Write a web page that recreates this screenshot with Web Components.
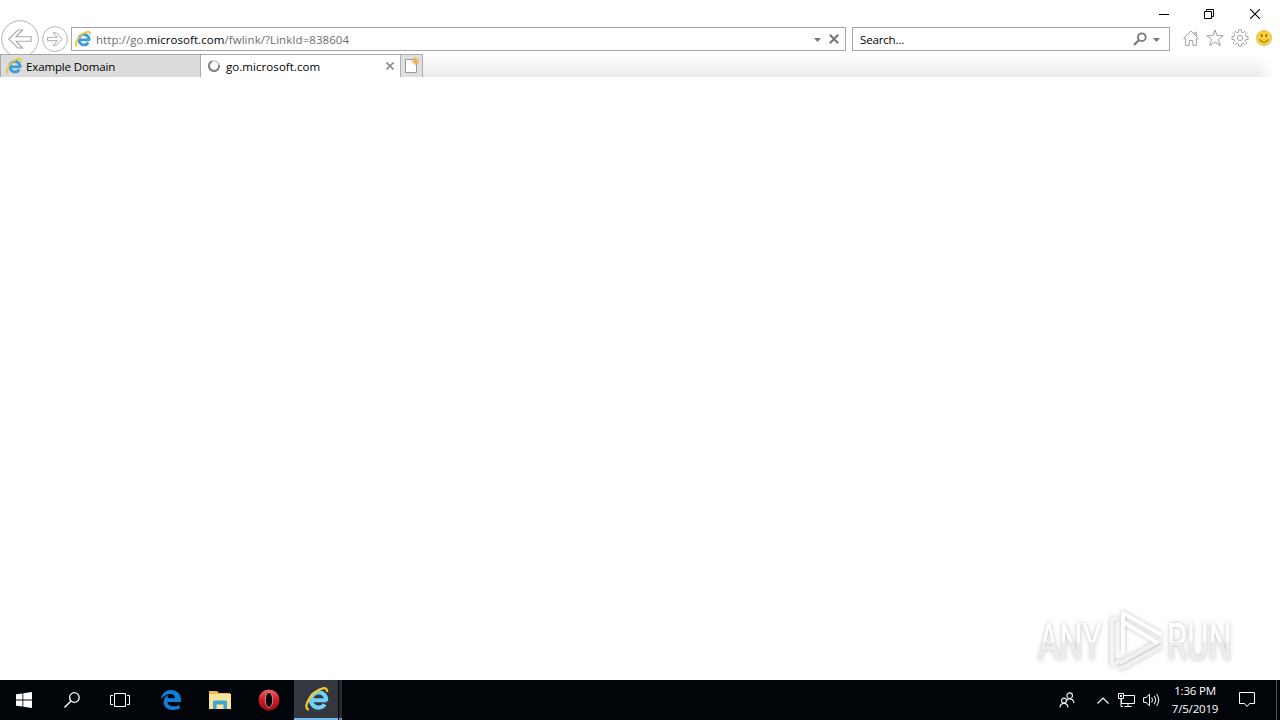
<!DOCTYPE html>
<html lang="en">
<head>
<meta charset="utf-8">
<title>go.microsoft.com</title>
<style>
    html, body {
        margin: 0;
        height: 100%;
        overflow: hidden;
        background: #fff;
        font-family: "Open Sans", "Noto Sans", sans-serif;
        font-size: 12px;
    }
</style>
</head>
<body>
<desktop-screen>
    <browser-window>
        <window-controls slot="title"></window-controls>
        <nav-bar slot="nav"></nav-bar>
        <tab-strip slot="tabs">
            <browser-tab><ui-icon slot="icon" name="ie" size="16"></ui-icon>Example Domain</browser-tab>
            <browser-tab active><ui-icon slot="icon" name="spinner" size="14"></ui-icon>go.microsoft.com</browser-tab>
        </tab-strip>
        <water-mark></water-mark>
    </browser-window>
    <task-bar slot="taskbar"></task-bar>
</desktop-screen>

<script>
const ICONS = {
    ie: ['0 0 16 16', `
        <path d="M4.500 8.900H14.200A5.200 5.200 0 1 0 13.300 11.600" fill="none" stroke="#3c9bdb" stroke-width="2.900" stroke-linejoin="bevel"/>
        <path d="M2.200 15C-.8 14.300 1.300 8.800 5.800 4.600 10.400.4 15.500-.9 14.900 3.600" fill="none" stroke="#f0c53a" stroke-width="1.900"/>`],
    ieLarge: ['0 0 24 24', `
        <path d="M7.500 13.200H21.200A7.600 7.600 0 1 0 19.800 17.400" fill="none" stroke="#72d0f5" stroke-width="4.100" stroke-linejoin="bevel"/>
        <path d="M3.800 22.700C-1 22 1.700 13.200 8.500 6.800 15 .8 22.800-1.200 22.200 5" fill="none" stroke="#f5c62e" stroke-width="2.200"/>`],
    spinner: ['0 0 14 14', `
        <circle cx="7" cy="7" r="5" fill="none" stroke="#cfcfcf" stroke-width="2"/>
        <path d="M5 2.400A5 5 0 1 0 11.900 6" fill="none" stroke="#808080" stroke-width="2"/>`],
    back: ['0 0 38 38', `
        <circle cx="19" cy="19" r="18.300" fill="#fff" stroke="#b5b5b5"/>
        <path d="M7.800 19 17 10h4.600L15 16.800H30.200v4.400H15L21.600 28H17Z" fill="#fff" stroke="#aaa" stroke-width="1.100"/>`],
    forward: ['0 0 26 26', `
        <circle cx="13" cy="13" r="12.400" fill="#fff" stroke="#b5b5b5"/>
        <path d="M20.500 13 14.300 6.800H11L15.500 11.300H5.500v3.400H15.500L11 19.200H14.300Z" fill="#fff" stroke="#aaa"/>`],
    caret: ['0 0 7 4', '<path d="M0 0H7L3.500 4Z" fill="#777"/>'],
    stop: ['0 0 10 10', '<path d="M.8.8 9.200 9.200M9.200.8.8 9.200" stroke="#737373" stroke-width="2"/>'],
    find: ['0 0 14 14', '<circle cx="8.800" cy="5.200" r="3.900" fill="none" stroke="#777" stroke-width="1.800"/><path d="M6 8 1 13" stroke="#777" stroke-width="2.200"/>'],
    home: ['0 0 16 16', '<path d="M.7 8.300 8 1 15.300 8.300 14.300 9.300 13.400 8.500V15.400H9.900V10.500H6.200V15.400H2.600V8.500L1.700 9.300ZM11.700 4.700V2.300H13.300V6.200" fill="#fff" stroke="#999" stroke-width=".9"/>'],
    star: ['0 0 18 18', '<path d="M9 1 11.100 6.700H17.200L12.400 10.500 14.300 16.600 9 13 3.700 16.600 5.600 10.500.8 6.700H6.900Z" fill="#fff" stroke="#999" stroke-width=".95"/>'],
    gear: ['0 0 18 18', `
        <path d="M7.500 1h3v2.200l1.700.7 1.600-1.600 2 2-1.600 1.600.7 1.600H17v3h-2.100l-.7 1.700 1.600 1.600-2 2-1.600-1.600-1.700.7V17h-3v-2.100l-1.700-.7-1.600 1.600-2-2 1.600-1.600-.7-1.700H1v-3h2.100l.7-1.600-1.600-1.600 2-2 1.600 1.600 1.700-.7Z" fill="#fff" stroke="#999" stroke-width=".9"/>
        <circle cx="9" cy="9" r="2.600" fill="#fff" stroke="#999" stroke-width=".9"/>`],
    smile: ['0 0 16 16', `
        <circle cx="8" cy="8" r="7.500" fill="#fcd13b" stroke="#dfb33c" stroke-width=".8"/>
        <path d="M5.700 4.300V7M10.300 4.300V7" stroke="#806014" stroke-width="1.500"/>
        <path d="M3.600 9.300Q8 15.300 12.400 9.300" fill="none" stroke="#8d6c17" stroke-width="1.100"/>`],
    tabClose: ['0 0 8 8', '<path d="M.5.5 7.500 7.500M7.500.5.5 7.500" stroke="#8d8d8d" stroke-width="1.600"/>'],
    newTab: ['0 0 16 16', `
        <path d="M1.500 2.500H12.500V15.500H1.500Z" fill="#fff" stroke="#999"/>
        <circle cx="11.500" cy="4" r="2.500" fill="#f5b94c"/>
        <path d="M11.500 0V8M7.500 4H15.500M8.800 1.200 14.300 6.800M14.300 1.200 8.800 6.800" stroke="#f0b24d"/>`],
    minimize: ['0 0 10 10', '<path d="M0 5.500H10" stroke="#000"/>'],
    restore: ['0 0 10 10', '<path d="M.5 2.500H7.500V9.500H.5ZM2.500 2.500V.5H9.500V7.500H7.500" fill="none" stroke="#000"/>'],
    close: ['0 0 10 10', '<path d="M0 0 10 10M10 0 0 10" stroke="#000" stroke-width="1.100"/>'],
    windows: ['0 0 16 16', '<path d="M0 2.300 6.500 1.400V7.500H0ZM7.300 1.300 16 0V7.500H7.300ZM0 8.400H6.500V14.600L0 13.700ZM7.300 8.400H16V16L7.300 14.700Z" fill="#fff"/>'],
    search: ['0 0 16 16', '<circle cx="10.400" cy="5.500" r="4.800" fill="none" stroke="#fff" stroke-width="1.300"/><path d="M7 9 .5 15.500" stroke="#fff" stroke-width="1.400"/>'],
    taskView: ['0 0 20 14', '<path d="M4.500.5H15.500V13.500H4.500ZM3 2.500H.5V11.500H3M17 2.500H19.500V11.500H17" fill="none" stroke="#fff"/>'],
    edge: ['0 0 20 20', '<path d="M0 9C.7 3.500 4.700 0 10 0 16.500 0 20 4.500 20 10V12H6.500C6.700 15 9.200 16.300 12.500 16.300 14.900 16.300 17 15.700 18.700 14.700V18.600C16.800 19.500 14.700 20 12.200 20 6.200 20 2.700 16.800 2.700 12.300 2.700 9 4.500 6.200 7.600 5 6.900 6 6.600 7.200 6.500 8.300H14C14 5.500 12.500 3.900 9.600 3.900 6 3.900 2.500 5.700 0 9Z" fill="#0882db"/>'],
    folder: ['0 0 22 18', `
        <path d="M0 0H8L10 2H21V18H0Z" fill="#e9bd55"/>
        <path d="M1 3H22V18H0V4Z" fill="#fbe398"/>
        <path d="M4 18V11Q4 9.500 5.500 9.500H16.500Q18 9.500 18 11V18H14.500V13.500H7.500V18Z" fill="#38a9df"/>`],
    opera: ['0 0 22 22', `
        <defs><linearGradient id="red" x2="0" y2="1"><stop stop-color="#ed6464"/><stop offset=".48" stop-color="#c91d27"/><stop offset="1" stop-color="#a20a16"/></linearGradient></defs>
        <circle cx="11" cy="11" r="10.500" fill="url(#red)"/>
        <ellipse cx="11" cy="11" rx="3.700" ry="7.700" fill="#09050a" stroke="#e9a0a0" stroke-width=".8"/>`],
    people: ['0 0 16 16', `
        <g fill="none" stroke="#eee" stroke-width="1.200">
            <circle cx="10.700" cy="3.700" r="2.800"/><path d="M7.500 8.500Q8.200 6.800 10.700 6.800 14.600 6.800 14.800 11"/>
            <circle cx="5" cy="8.600" r="2.500"/><path d="M1 15.500Q1.300 11.400 5 11.400T9 15.500"/>
        </g>`],
    chevron: ['0 0 12 7', '<path d="M.5 6.500 6 1 11.500 6.500" fill="none" stroke="#fff" stroke-width="1.200"/>'],
    network: ['0 0 17 15', '<path d="M5.500 2.500H16.500V10.500H3.500V6M.5.500H5.500V5.500H.5ZM3 5.500V13.500H5M10 10.500V13.500M6.500 13.500H13.500" fill="none" stroke="#fff"/><path d="M2 2H4V4H2Z" fill="#fff"/>'],
    volume: ['0 0 17 14', '<path d="M.6 4.600H3L6.500 1.200V12.800L3 9.400H.6Z" fill="none" stroke="#fff"/><path d="M8.500 4.700Q10.400 7 8.500 9.300M11 2.800Q14.200 7 11 11.200M13.500 1Q18 7 13.500 13" fill="none" stroke="#ddd" stroke-width="1.100"/>'],
    action: ['0 0 16 16', '<path d="M.5.500H15.500V11.500H10.500L8 14.500 5.500 11.500H.5Z" fill="none" stroke="#fff"/>']
};

class UiIcon extends HTMLElement {
    constructor() {
        super();
        this.attachShadow({ mode: 'open' });
    }

    connectedCallback() {
        const [box, body] = ICONS[this.getAttribute('name')];
        const [, , w, h] = box.split(' ').map(Number);
        const width = Number(this.getAttribute('size')) || w;
        this.shadowRoot.innerHTML = `
            <style>
                :host { display: block; flex: none; }
                svg { display: block; }
            </style>
            <svg width="${width}" height="${width * h / w}" viewBox="${box}" aria-hidden="true">${body}</svg>
        `;
    }
}

class DesktopScreen extends HTMLElement {
    constructor() {
        super();
        this.attachShadow({ mode: 'open' }).innerHTML = `
            <style>
                :host { display: grid; grid-template-rows: 1fr 40px; height: 100vh; }
            </style>
            <slot></slot>
            <slot name="taskbar"></slot>
        `;
    }
}

class BrowserWindow extends HTMLElement {
    constructor() {
        super();
        this.attachShadow({ mode: 'open' }).innerHTML = `
            <style>
                :host { display: grid; grid-template-rows: 27px 27px 23px 1fr; background: #fff; min-height: 0; }
                main { display: flex; align-items: flex-end; justify-content: flex-end; padding: 0 36px 6px 0; }
            </style>
            <slot name="title"></slot>
            <slot name="nav"></slot>
            <slot name="tabs"></slot>
            <main><slot></slot></main>
        `;
    }
}

class WindowControls extends HTMLElement {
    constructor() {
        super();
        this.attachShadow({ mode: 'open' }).innerHTML = `
            <style>
                :host { display: flex; justify-content: flex-end; gap: 36px; padding: 9px 20px 0 0; }
                .min { margin-right: -1px; }
            </style>
            <ui-icon class="min" name="minimize"></ui-icon>
            <ui-icon name="restore"></ui-icon>
            <ui-icon name="close"></ui-icon>
        `;
    }
}

class NavBar extends HTMLElement {
    constructor() {
        super();
        this.attachShadow({ mode: 'open' }).innerHTML = `
            <style>
                :host { display: flex; align-items: center; height: 24px; padding: 0 8px 0 1px; }
                .back { margin-right: 3px; }
                .field {
                    display: flex;
                    align-items: center;
                    box-sizing: border-box;
                    height: 24px;
                    border: 1px solid #a6a6a6;
                    background: #fff;
                }
                .address { width: 775px; margin: 0 6px 0 3px; padding: 0 6px 0 3px; }
                .search { width: 318px; padding: 0 9px 0 7px; }
                .text { flex: 1; white-space: nowrap; }
                .url { margin-left: 5px; color: #6d6d6d; font-size: 11.5px; letter-spacing: 0.06px; }
                .query { font-size: 11.5px; letter-spacing: -0.15px; }
                b { font-weight: 400; color: #000; }
                .caret { margin-top: 2px; }
                .stop { margin-left: 8px; }
                .search .find { margin-right: 1px; }
                .search .caret { margin-left: 5px; }
                .tools { display: flex; align-items: center; gap: 7px; margin: 0 0 2px 13px; }
            </style>
            <ui-icon class="back" name="back"></ui-icon>
            <ui-icon name="forward"></ui-icon>
            <div class="field address">
                <ui-icon name="ie"></ui-icon>
                <span class="text url">http://go.<b>microsoft.com</b>/fwlink/?LinkId=838604</span>
                <ui-icon class="caret" name="caret"></ui-icon>
                <ui-icon class="stop" name="stop"></ui-icon>
            </div>
            <div class="field search">
                <span class="text query">Search...</span>
                <ui-icon class="find" name="find"></ui-icon>
                <ui-icon class="caret" name="caret"></ui-icon>
            </div>
            <div class="tools">
                <ui-icon name="home"></ui-icon>
                <ui-icon name="star"></ui-icon>
                <ui-icon name="gear"></ui-icon>
                <ui-icon name="smile"></ui-icon>
            </div>
        `;
    }
}

class TabStrip extends HTMLElement {
    constructor() {
        super();
        this.attachShadow({ mode: 'open' }).innerHTML = `
            <style>
                :host { display: flex; z-index: 1; }
                .new {
                    display: flex;
                    justify-content: center;
                    box-sizing: border-box;
                    width: 23px;
                    padding-top: 2px;
                    border: 1px solid #b0b0b0;
                    border-bottom: 0;
                    background: #dfdfdf;
                }
                .rest {
                    flex: 1;
                    margin-right: 5px;
                    background: linear-gradient(to right, transparent calc(100% - 18px), #fff), linear-gradient(#fff, #ebebeb);
                }
            </style>
            <slot></slot>
            <div class="new"><ui-icon name="newTab"></ui-icon></div>
            <div class="rest"></div>
        `;
    }
}

class BrowserTab extends HTMLElement {
    constructor() {
        super();
        this.attachShadow({ mode: 'open' });
    }

    connectedCallback() {
        const active = this.hasAttribute('active');
        this.shadowRoot.innerHTML = `
            <style>
                :host {
                    display: flex;
                    align-items: center;
                    box-sizing: border-box;
                    width: 200px;
                    height: 23px;
                    padding: 0 6px 0 5px;
                    border: solid #a9a9a9;
                    border-width: 1px 0 0 1px;
                    background: #dcdcdc;
                    font-size: 11.5px;
                    letter-spacing: -0.13px;
                    white-space: nowrap;
                }
                :host([active]) { background: #fff; padding-left: 6px; letter-spacing: 0.06px; }
                .label { flex: 1; margin-left: 4px; }
                :host([active]) .label { margin-left: 5px; }
            </style>
            <slot name="icon"></slot>
            <span class="label"><slot></slot></span>
            ${active ? '<ui-icon name="tabClose"></ui-icon>' : ''}
        `;
    }
}

class WaterMark extends HTMLElement {
    constructor() {
        super();
        this.attachShadow({ mode: 'open' }).innerHTML = `
            <style>
                :host { display: block; }
                svg { display: block; overflow: visible; filter: drop-shadow(0 0 2px rgba(0, 0, 0, 0.25)); }
                text { font: 400 52px "Roboto", sans-serif; fill: url(#fade); }
            </style>
            <svg width="208" height="66" viewBox="0 0 208 66">
                <defs>
                    <linearGradient id="fade" gradientUnits="userSpaceOnUse" x1="0" x2="0" y1="-36" y2="0">
                        <stop offset=".48" stop-color="#fff"/>
                        <stop offset=".52" stop-color="#ededed"/>
                    </linearGradient>
                </defs>
                <text transform="translate(2 52) scale(.63 1)">ANY</text>
                <text transform="translate(131 52) scale(.63 1)">RUN</text>
                <g fill="none" stroke-width="4" stroke-linejoin="round">
                    <path d="M84 55 125 32" stroke="#f1f1f1"/>
                    <path d="M84 61 126 38" stroke="#f1f1f1"/>
                    <path d="M81 11H76V57L84 53" stroke="#f4f4f4"/>
                    <path d="M87 46V5L126 27M87 14 122 35" stroke="#fff"/>
                </g>
            </svg>
        `;
    }
}

class TaskBar extends HTMLElement {
    constructor() {
        super();
        this.attachShadow({ mode: 'open' }).innerHTML = `
            <style>
                :host { display: flex; background: #010409; color: #fff; }
                .item { display: flex; align-items: center; justify-content: center; width: 48px; }
                .edge { width: 54px; }
                .folder { width: 44px; }
                .opera { box-sizing: border-box; width: 52px; padding-left: 2px; }
                .ie { box-sizing: border-box; width: 44px; background: #34373e; border-bottom: 2px solid #76b9ed; padding: 0 0 0 2px; }
                .stack { box-sizing: border-box; width: 3px; margin-left: 1px; background: #24272d; border-bottom: 2px solid #5d94be; }
                .tray { display: flex; align-items: center; margin-left: auto; }
                .chevron { margin: 0 9px 0 22px; }
                .volume { margin-left: 8px; }
                .clock {
                    width: 62px;
                    margin: 0 13px 0 4px;
                    font-size: 11.5px;
                    line-height: 18px;
                    letter-spacing: -0.2px;
                    text-align: center;
                }
                .edge-line { align-self: stretch; width: 1px; margin: 0 3px 0 21px; background: #53565a; }
            </style>
            <div class="item"><ui-icon name="windows"></ui-icon></div>
            <div class="item"><ui-icon name="search"></ui-icon></div>
            <div class="item"><ui-icon name="taskView"></ui-icon></div>
            <div class="item edge"><ui-icon name="edge"></ui-icon></div>
            <div class="item folder"><ui-icon name="folder"></ui-icon></div>
            <div class="item opera"><ui-icon name="opera"></ui-icon></div>
            <div class="item ie"><ui-icon name="ieLarge"></ui-icon></div>
            <div class="stack"></div>
            <div class="tray">
                <ui-icon name="people"></ui-icon>
                <ui-icon class="chevron" name="chevron"></ui-icon>
                <ui-icon name="network"></ui-icon>
                <ui-icon class="volume" name="volume"></ui-icon>
                <div class="clock"><div>1:36 PM</div><div>7/5/2019</div></div>
                <ui-icon name="action"></ui-icon>
                <div class="edge-line"></div>
            </div>
        `;
    }
}

customElements.define('ui-icon', UiIcon);
customElements.define('desktop-screen', DesktopScreen);
customElements.define('browser-window', BrowserWindow);
customElements.define('window-controls', WindowControls);
customElements.define('nav-bar', NavBar);
customElements.define('tab-strip', TabStrip);
customElements.define('browser-tab', BrowserTab);
customElements.define('water-mark', WaterMark);
customElements.define('task-bar', TaskBar);
</script>
</body>
</html>
